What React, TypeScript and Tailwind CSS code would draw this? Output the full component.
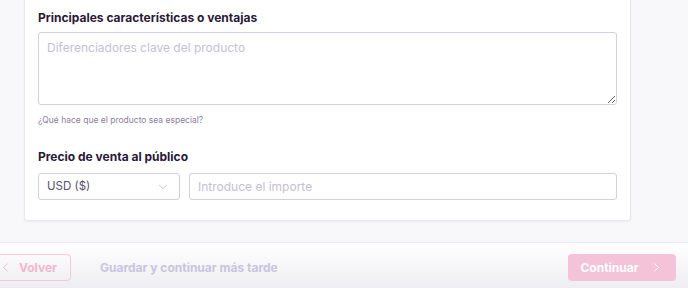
import { ChevronDown, ChevronLeft, ChevronRight } from "lucide-react";

export default function App() {
    return (
        <div className="flex h-[288px] w-[688px] flex-col overflow-hidden bg-[#f8f8fa] font-['Inter',sans-serif]">
            <div className="pl-[24px] pr-[57px]">
                <div className="rounded-b-[3px] border border-t-0 border-[#e9e7ef] bg-white px-[13px] pb-[20px] pt-[9px] shadow-[0_1px_2px_rgba(40,30,70,0.06)]">
                    <h2 className="mb-[5px] text-[12px] font-bold leading-[18px] text-[#2a1838]">
                        Principales características o ventajas
                    </h2>
                    <textarea
                        placeholder="Diferenciadores clave del producto"
                        className="block h-[73px] w-full resize-y rounded-[3px] border border-[#d3cfe0] px-[8px] py-[6px] text-[12px] text-[#2a1a3c] outline-none placeholder:text-[#c6c0d4]"
                    />
                    <p className="mt-[9px] text-[8.5px] leading-[12px] text-[#8b80a0]">¿Qué hace que el producto sea especial?</p>

                    <h2 className="mb-[7px] mt-[22px] text-[12px] font-bold leading-[18px] text-[#2a1838]">
                        Precio de venta al público
                    </h2>
                    <div className="flex gap-[9px]">
                        <button
                            type="button"
                            className="flex h-[27px] w-[142px] items-center justify-between rounded-[3px] border border-[#d3cfe0] bg-white pl-[8px] pr-[9px] text-[11.5px] text-[#5c4f70]"
                        >
                            USD ($)
                            <ChevronDown className="h-[14px] w-[14px] text-[#bdb8c9]" strokeWidth={1.5} />
                        </button>
                        <input
                            placeholder="Introduce el importe"
                            className="h-[27px] flex-1 rounded-[3px] border border-[#d3cfe0] px-[8px] text-[12px] outline-none placeholder:text-[#c6c0d4]"
                        />
                    </div>
                </div>
            </div>

            <footer className="mt-[21px] flex flex-1 items-start justify-between border-t border-[#ebeaef] bg-gradient-to-b from-white to-[#eeedf1] pr-[12px] pt-[11px]">
                <div className="flex items-center">
                    <button
                        type="button"
                        className="-ml-[5px] flex h-[27px] items-center gap-[6px] rounded-[4px] border border-[#f6c8d9] pl-[2px] pr-[13px] text-[12px] font-bold text-[#f3b7cd]"
                    >
                        <ChevronLeft className="h-[15px] w-[15px]" strokeWidth={1.5} />
                        Volver
                    </button>
                    <span className="ml-[29px] text-[12px] font-bold text-[#c9c4e0]">Guardar y continuar más tarde</span>
                </div>
                <button
                    type="button"
                    className="flex h-[27px] w-[108px] items-center justify-center gap-[10px] rounded-[4px] bg-[#f4c3d7] text-[12px] font-bold text-white"
                >
                    Continuar
                    <ChevronRight className="h-[15px] w-[15px]" strokeWidth={1.5} />
                </button>
            </footer>
        </div>
    );
}
